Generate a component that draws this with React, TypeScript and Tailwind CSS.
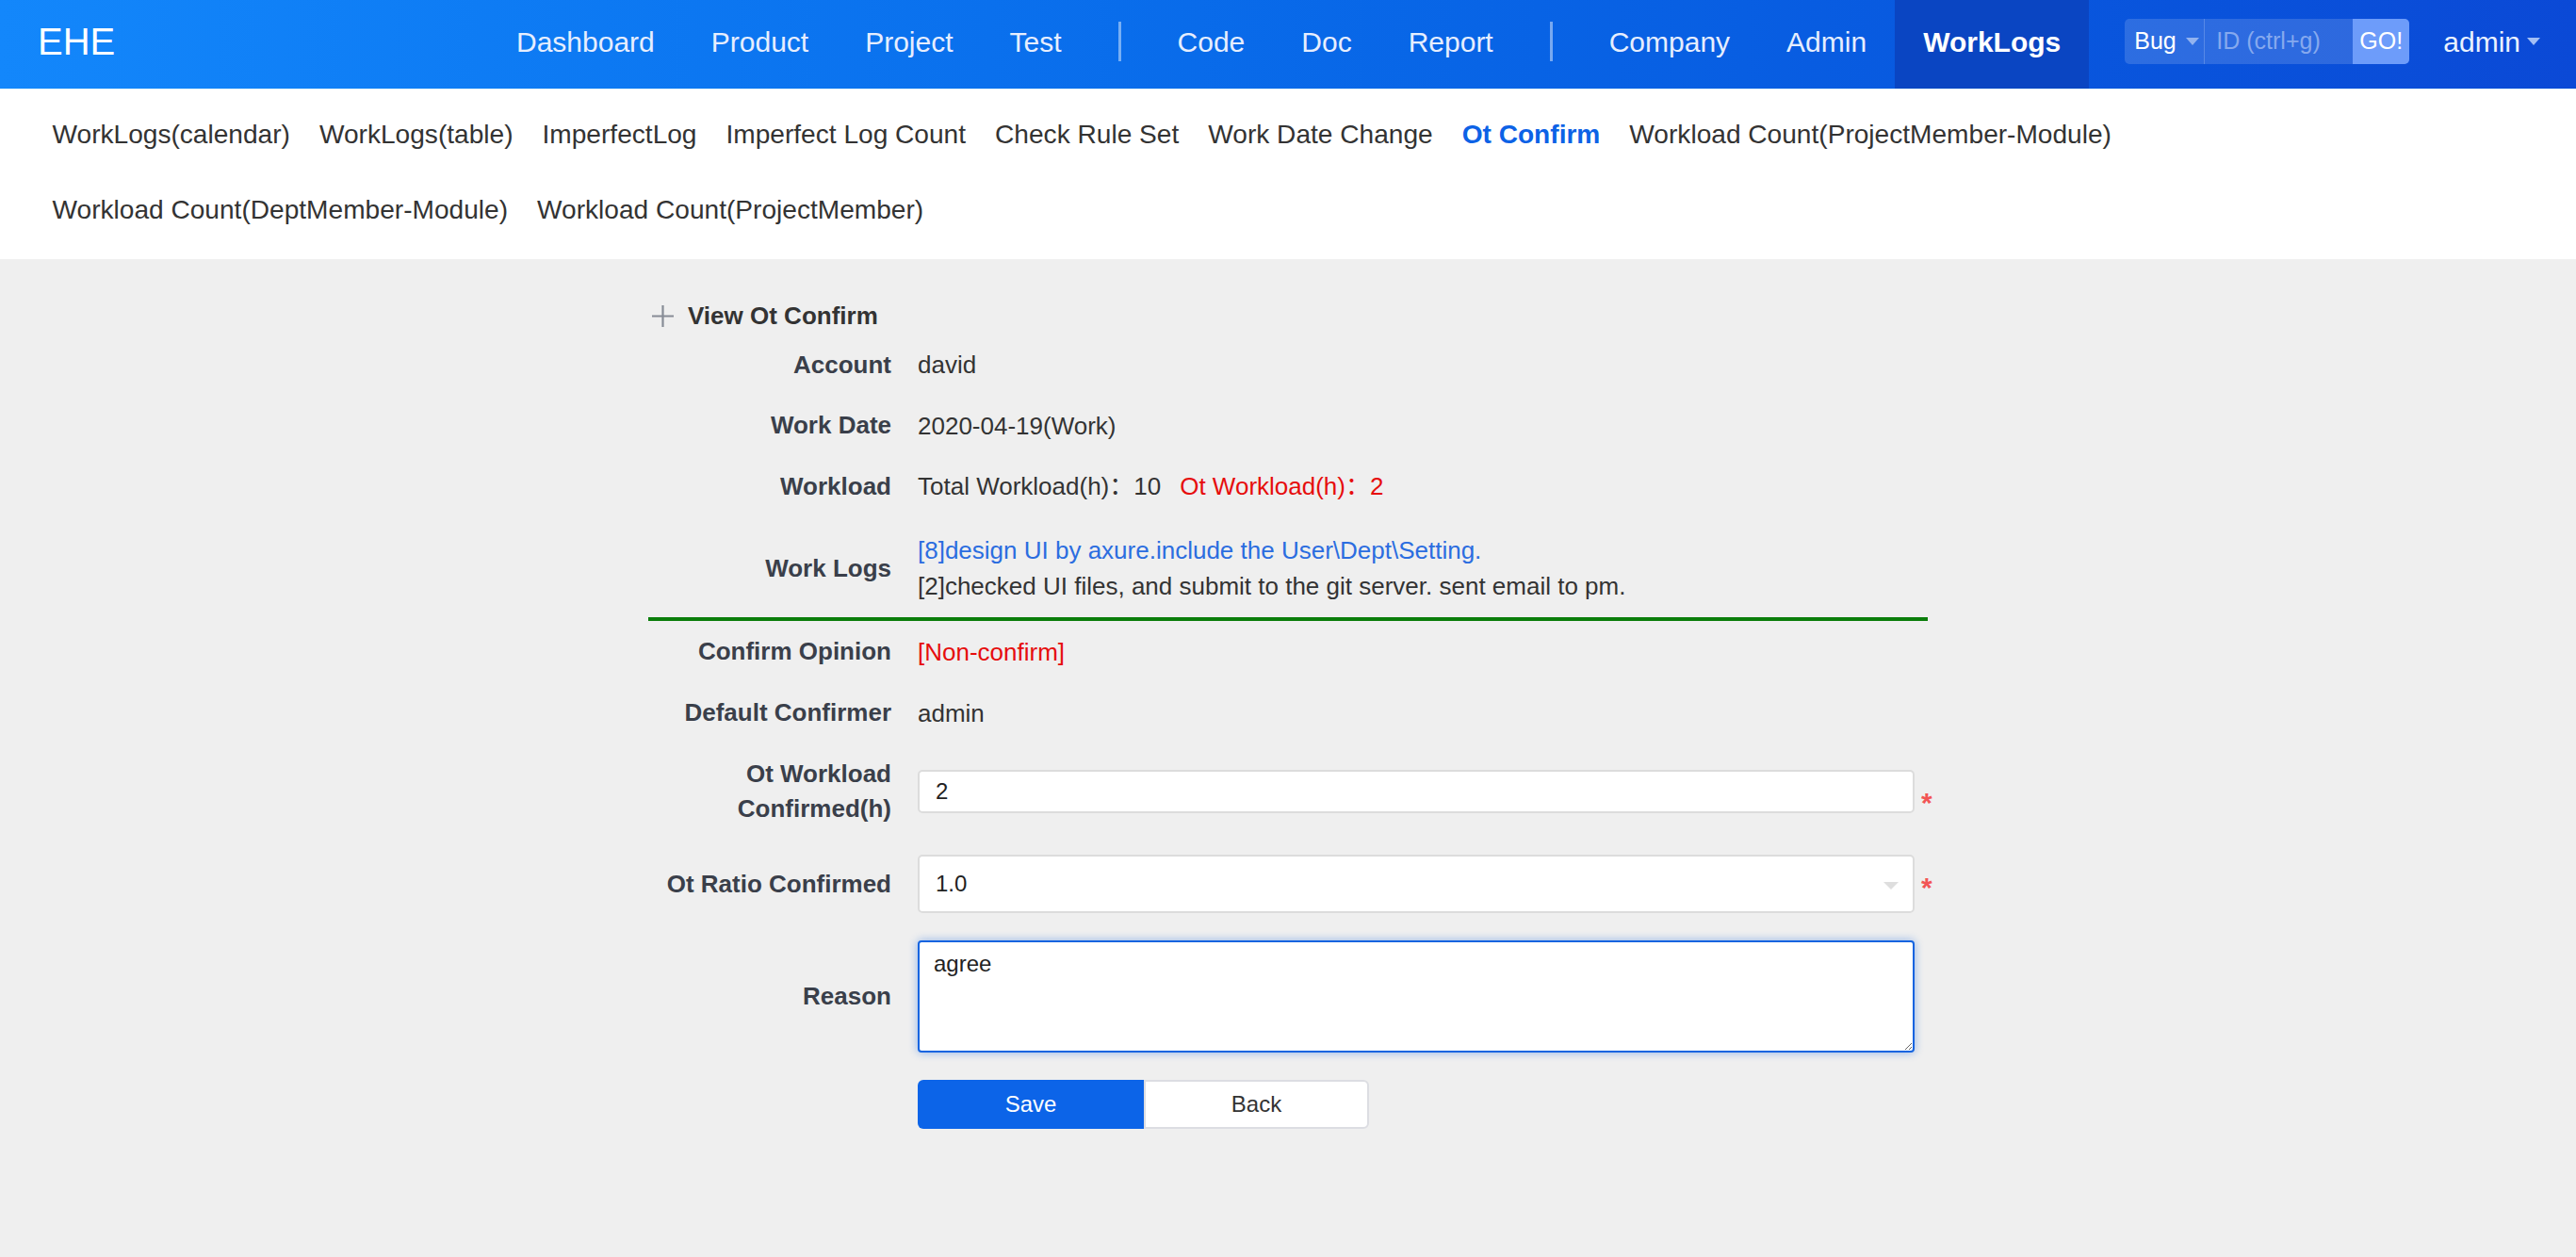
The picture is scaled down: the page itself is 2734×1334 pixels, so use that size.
import React from "react";

const topNav = ["Dashboard", "Product", "Project", "Test", "|", "Code", "Doc", "Report", "|", "Company", "Admin"];

const subRow1 = [
  "WorkLogs(calendar)",
  "WorkLogs(table)",
  "ImperfectLog",
  "Imperfect Log Count",
  "Check Rule Set",
  "Work Date Change",
  "Ot Confirm",
  "Workload Count(ProjectMember-Module)",
];
const subRow2 = ["Workload Count(DeptMember-Module)", "Workload Count(ProjectMember)"];

function Caret({ color = "border-t-[#a3bff5]" }: { color?: string }) {
  return <span className={`inline-block w-0 h-0 border-x-[7px] border-x-transparent border-t-[8px] ${color}`} />;
}

function Row({ label, children, className = "" }: { label: React.ReactNode; children: React.ReactNode; className?: string }) {
  return (
    <div className={`flex items-center ${className}`}>
      <div className="w-[286px] shrink-0 pr-[28px] text-right font-bold text-[26px] leading-[37px] text-[#3a3f4a]">{label}</div>
      <div className="flex-1 flex items-center text-[26px] leading-[38px] text-[#333]">{children}</div>
    </div>
  );
}

function Star({ offset = "pt-[10px]" }: { offset?: string }) {
  return <span className={`ml-[7px] text-[#f25555] text-[30px] leading-none font-bold ${offset}`}>*</span>;
}

export default function App() {
  return (
    <div className="min-h-screen bg-[#efefef] font-['Liberation_Sans','Noto_Sans_CJK_SC',Arial,sans-serif]">
      {/* Header */}
      <header className="h-[94px] flex items-stretch pl-[40px] pr-[38px] bg-linear-to-r from-[#1387fb] to-[#0b49d6]">
        <div className="flex items-center pb-[6px] text-[40px] text-white leading-none">EHE</div>
        <nav className="ml-auto flex items-stretch">
          {topNav.map((item, i) =>
            item === "|" ? (
              <div key={i} className="flex items-center pb-[6px] mx-[30px]">
                <span className="w-[3px] h-[42px] bg-white/45" />
              </div>
            ) : (
              <a key={i} className="flex items-center pb-[6px] px-[30px] text-[30px] text-[#e6eefe]">
                {item}
              </a>
            )
          )}
          <a className="flex items-center pb-[6px] px-[30px] bg-[#0a45c2] text-[30px] font-bold text-white">WorkLogs</a>
        </nav>
        <div className="ml-[38px] flex items-center pb-[6px]">
          <div className="flex h-[48px] rounded-[5px] overflow-hidden bg-white/15">
            <div className="w-[85px] flex items-center pl-[10px] gap-[10px] border-r border-white/20">
              <span className="text-[25px] text-white">Bug</span>
              <Caret color="border-t-[#93b3ef]" />
            </div>
            <div className="w-[157px] flex items-center pl-[12px] text-[25px] text-[#86a9ee] whitespace-nowrap">ID (ctrl+g)</div>
            <div className="w-[60px] flex items-center justify-center bg-[#6d9cfa] text-[25px] text-white">GO!</div>
          </div>
        </div>
        <div className="ml-[36px] flex items-center gap-[7px] pb-[6px]">
          <span className="text-[30px] text-[#eaf2ff]">admin</span>
          <Caret />
        </div>
      </header>

      {/* Sub navigation */}
      <div className="bg-white border-t border-[#dff6fb] pl-[40px] pt-[8px] pb-[12px]">
        <div className="flex">
          {subRow1.map((s) => (
            <a
              key={s}
              className={`px-[15.5px] h-[80px] leading-[80px] text-[28.1px] whitespace-nowrap ${
                s === "Ot Confirm" ? "font-bold text-[#0c62e6]" : "text-[#333]"
              }`}
            >
              {s}
            </a>
          ))}
        </div>
        <div className="flex">
          {subRow2.map((s) => (
            <a key={s} className="px-[15.5px] h-[80px] leading-[80px] text-[28.1px] whitespace-nowrap text-[#333]">
              {s}
            </a>
          ))}
        </div>
      </div>

      {/* Form */}
      <main className="w-[1358px] mx-auto pt-[40px] pb-[120px]">
        <div className="h-[40px] flex items-center pl-[3px]">
          <svg width="25" height="25" viewBox="0 0 25 25" className="shrink-0">
            <path d="M12.5 1v23M1 12.5h23" stroke="#878c96" strokeWidth="2.2" fill="none" />
          </svg>
          <span className="ml-[14px] font-bold text-[26px] text-[#333]">View Ot Confirm</span>
        </div>

        <Row label="Account" className="h-[64px]">david</Row>
        <Row label="Work Date" className="h-[65px]">2020-04-19(Work)</Row>
        <Row label="Workload" className="h-[64px]">
          <span>Total Workload(h)：10</span>
          <span className="ml-[20px] text-[#e60d0d]">Ot Workload(h)：2</span>
        </Row>
        <Row label="Work Logs" className="h-[107px] pt-[3px]">
          <div className="flex flex-col">
            <span className="text-[#2b6de0]">[8]design UI by axure.include the User\Dept\Setting.</span>
            <span>[2]checked UI files, and submit to the git server. sent email to pm.</span>
          </div>
        </Row>

        <div className="h-[4px] bg-[#0a7d0a]" />

        <Row label="Confirm Opinion" className="h-[65px]">
          <span className="text-[#e60d0d]">[Non-confirm]</span>
        </Row>
        <Row label="Default Confirmer" className="h-[65px]">admin</Row>

        <Row label={<>Ot Workload<br />Confirmed(h)</>} className="pt-[14px]">
          <input
            defaultValue="2"
            className="w-[1058px] h-[46px] bg-white border-2 border-[#dcdcdc] rounded-[5px] pl-[17px] text-[24px] text-[#222] outline-none"
          />
          <Star offset="pt-[24px]" />
        </Row>

        <Row label="Ot Ratio Confirmed" className="mt-[30px]">
          <div className="relative w-[1058px] h-[62px] bg-white border-2 border-[#dcdcdc] rounded-[5px] pl-[17px] flex items-center text-[24px] text-[#222]">
            1.0
            <span className="absolute right-[15px] top-[27px] w-0 h-0 border-x-[8px] border-x-transparent border-t-[8px] border-t-[#dedede]" />
          </div>
          <Star offset="pt-[8px]" />
        </Row>

        <Row label="Reason" className="mt-[29px]">
          <textarea
            defaultValue="agree"
            className="w-[1058px] h-[119px] bg-white border-2 border-[#1464e0] rounded-[4px] px-[15px] pt-[8px] text-[24px] leading-[30px] text-[#222] outline-none shadow-[0_0_10px_rgba(20,100,224,0.45)]"
          />
        </Row>

        <div className="flex mt-[29px] pl-[286px]">
          <button className="w-[240px] h-[52px] bg-[#0c64e8] rounded-l-[6px] text-white text-[24px]">Save</button>
          <button className="w-[239px] h-[52px] bg-white border-2 border-[#dcdde2] rounded-r-[6px] text-[#333] text-[24px]">
            Back
          </button>
        </div>
      </main>
    </div>
  );
}
